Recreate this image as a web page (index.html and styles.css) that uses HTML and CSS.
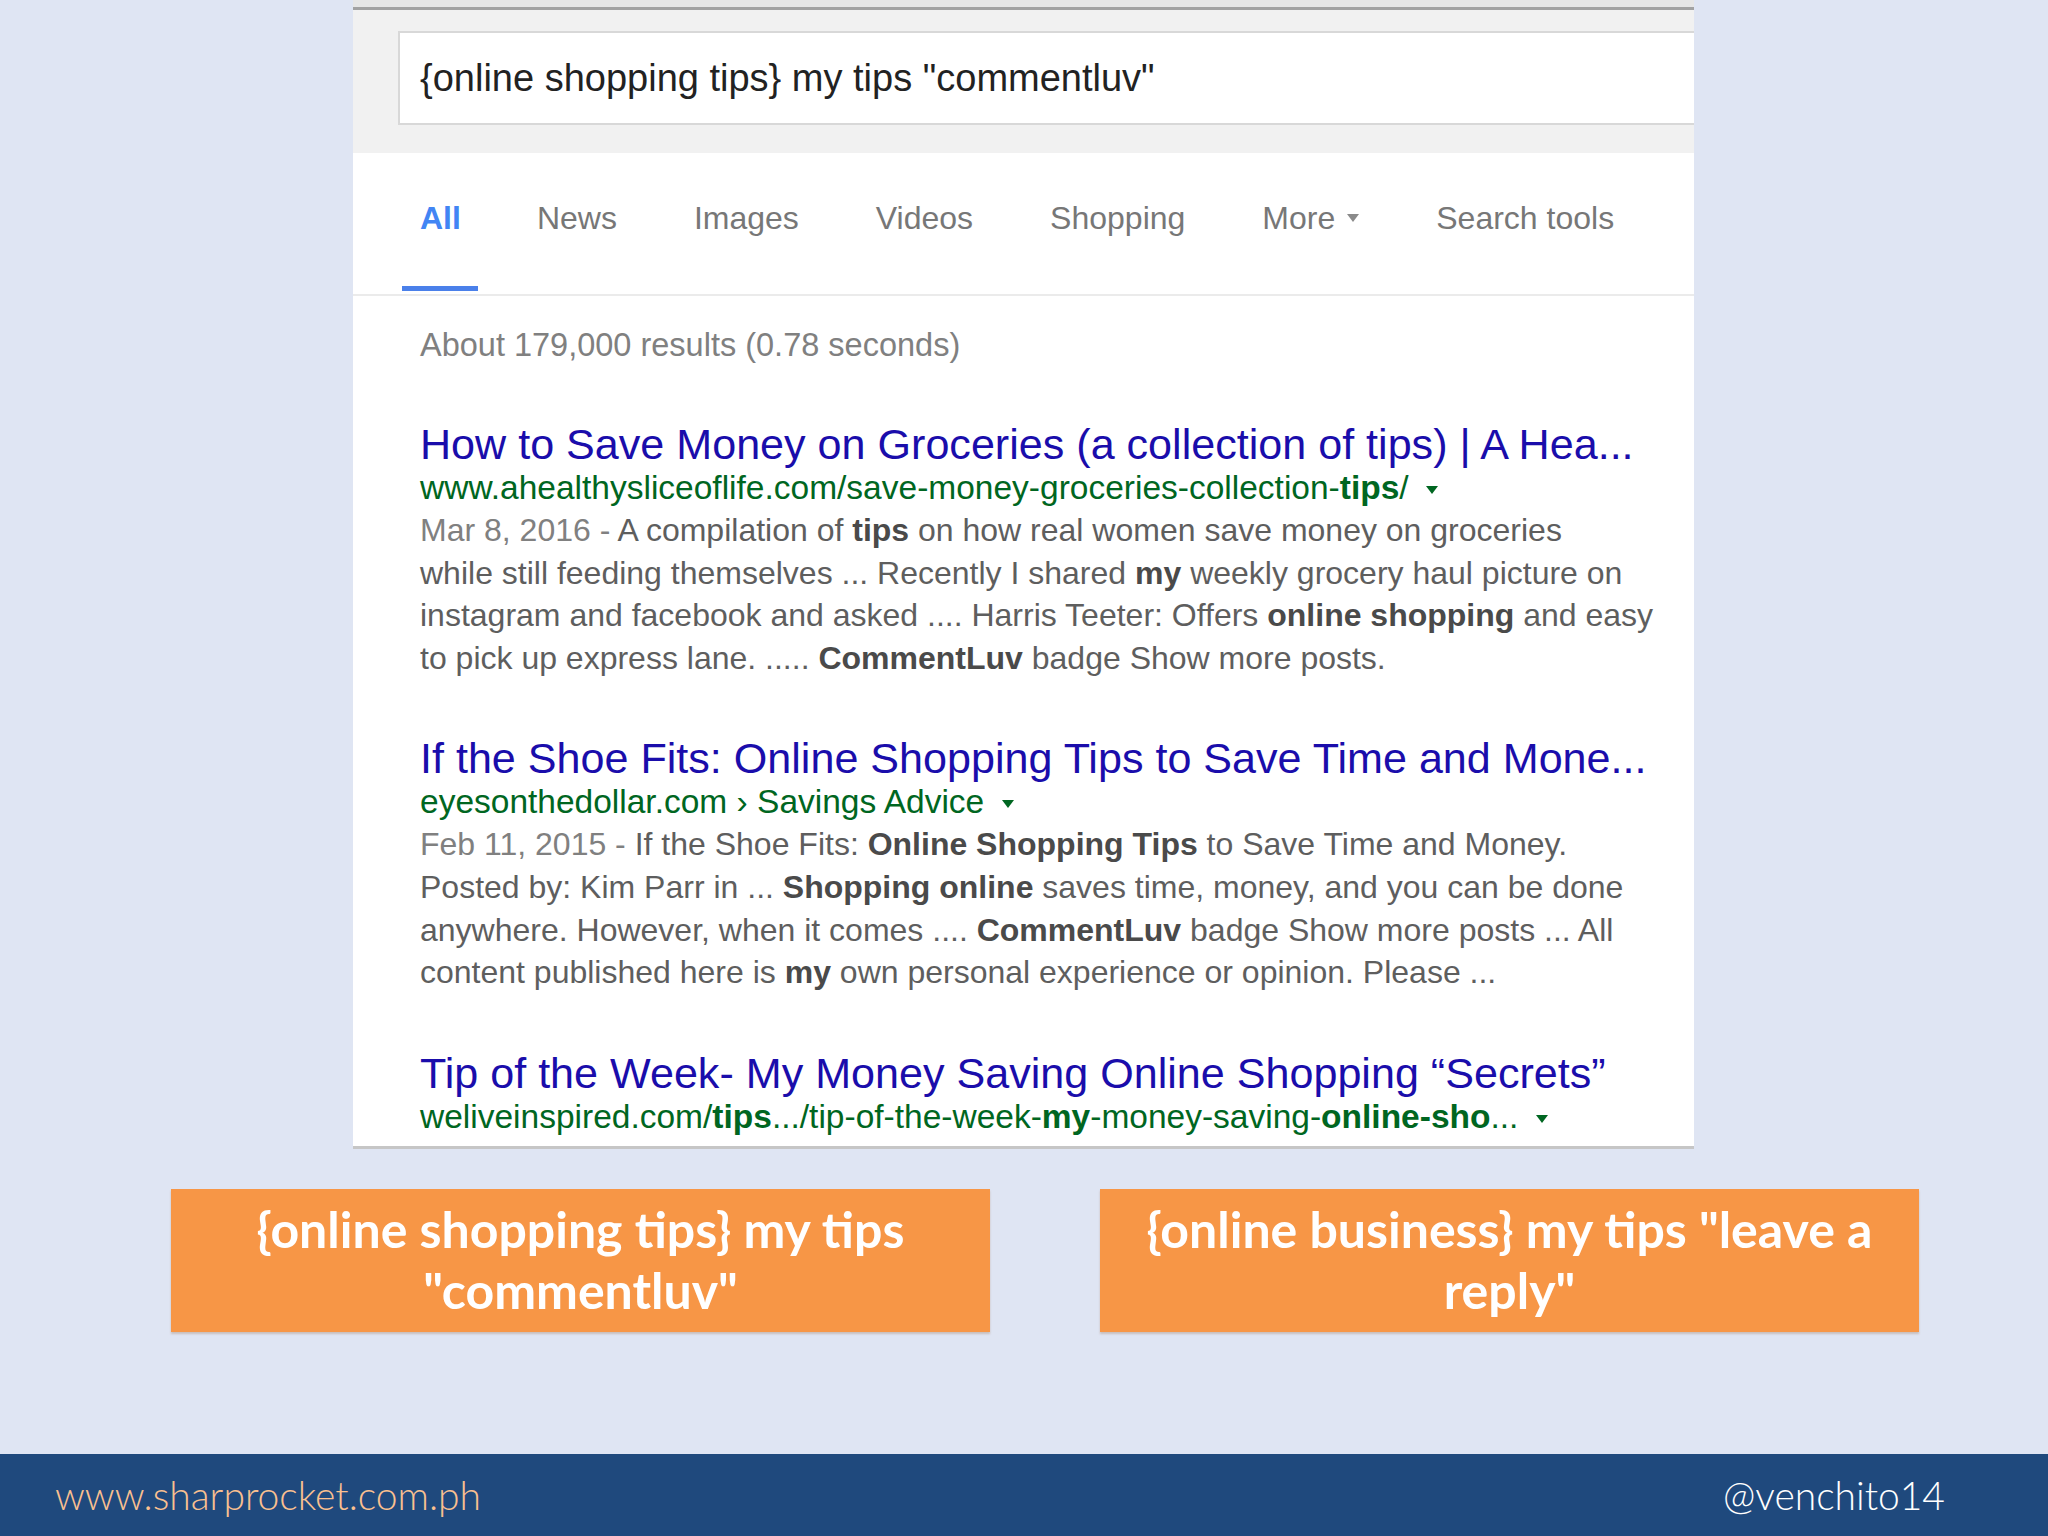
FILE: index.html
```html
<!DOCTYPE html>
<html>
<head>
<meta charset="utf-8">
<link rel="stylesheet" href="styles.css">
</head>
<body>
<div class="slide">
  <div class="panel">
    <div class="top-strip"></div>
    <div class="search-header">
      <div class="search-box">{online shopping tips} my tips "commentluv"</div>
    </div>
    <div class="tabs">
      <div class="tab active">All</div>
      <div class="tab">News</div>
      <div class="tab">Images</div>
      <div class="tab">Videos</div>
      <div class="tab">Shopping</div>
      <div class="tab">More <svg class="caret" viewBox="0 0 12 8" width="12" height="8"><path d="M0 0 L12 0 L6 8 Z" fill="#8a8a8a"/></svg></div>
      <div class="tab">Search tools</div>
    </div>
    <div class="results">
      <div class="count">About 179,000 results (0.78 seconds)</div>

      <div class="result">
        <div class="title">How to Save Money on Groceries (a collection of tips) | A Hea...</div>
        <div class="url">www.ahealthysliceoflife.com/save-money-groceries-collection-<b>tips</b>/ <svg class="drop" viewBox="0 0 12 8" width="12" height="8"><path d="M0 0 L12 0 L6 8 Z" fill="#006621"/></svg></div>
        <div class="snippet"><span class="date">Mar 8, 2016 - </span>A compilation of <b>tips</b> on how real women save money on groceries<br>while still feeding themselves ... Recently I shared <b>my</b> weekly grocery haul picture on<br>instagram and facebook and asked .... Harris Teeter: Offers <b>online shopping</b> and easy<br>to pick up express lane. ..... <b>CommentLuv</b> badge Show more posts.</div>
      </div>

      <div class="result">
        <div class="title">If the Shoe Fits: Online Shopping Tips to Save Time and Mone...</div>
        <div class="url">eyesonthedollar.com › Savings Advice <svg class="drop" viewBox="0 0 12 8" width="12" height="8"><path d="M0 0 L12 0 L6 8 Z" fill="#006621"/></svg></div>
        <div class="snippet"><span class="date">Feb 11, 2015 - </span>If the Shoe Fits: <b>Online Shopping Tips</b> to Save Time and Money.<br>Posted by: Kim Parr in ... <b>Shopping online</b> saves time, money, and you can be done<br>anywhere. However, when it comes .... <b>CommentLuv</b> badge Show more posts ... All<br>content published here is <b>my</b> own personal experience or opinion. Please ...</div>
      </div>

      <div class="result">
        <div class="title">Tip of the Week- My Money Saving Online Shopping “Secrets”</div>
        <div class="url">weliveinspired.com/<b>tips</b>.../tip-of-the-week-<b>my</b>-money-saving-<b>online-sho</b>... <svg class="drop" viewBox="0 0 12 8" width="12" height="8"><path d="M0 0 L12 0 L6 8 Z" fill="#006621"/></svg></div>
      </div>
    </div>
  </div>

  <div class="boxes">
    <div class="box">{online shopping tips} my tips<br>"commentluv"</div>
    <div class="box">{online business} my tips "leave a<br>reply"</div>
  </div>

  <div class="footer">
    <div class="site">www.sharprocket.com.ph</div>
    <div class="handle">@venchito14</div>
  </div>
</div>
</body>
</html>
```
FILE: styles.css
```css
html, body {
  margin: 0;
  padding: 0;
}
body {
  background: #dfe5f3;
  font-family: "Liberation Sans", Arial, sans-serif;
}
.slide {
  width: 2048px;
  height: 1536px;
  display: flex;
  flex-direction: column;
  overflow: hidden;
}
.panel {
  margin-left: 353px;
  width: 1341px;
  height: 1149px;
  background: #fff;
  border-bottom: 3px solid #c6c6c6;
  box-sizing: border-box;
  overflow: hidden;
  flex-shrink: 0;
}
.top-strip {
  height: 7px;
  background: #e6e6e6;
  border-bottom: 3px solid #a2a2a2;
}
.search-header {
  background: #f1f1f1;
  padding: 21px 0 28px 45px;
}
.search-box {
  height: 94px;
  box-sizing: border-box;
  background: #fff;
  border: 2px solid #d8d8d8;
  border-right: none;
  display: flex;
  align-items: center;
  padding-left: 20px;
  font-size: 38px;
  color: #222;
}
.tabs {
  height: 141px;
  border-bottom: 2px solid #ebebeb;
  display: flex;
  align-items: flex-start;
  padding-left: 49px;
  gap: 41px;
  box-sizing: content-box;
}
.tab {
  font-size: 32px;
  color: #777;
  line-height: 40px;
  padding: 45px 18px 0 18px;
  height: 88px;
  display: flex;
  align-items: flex-start;
}
.tab.active {
  color: #4285f4;
  font-weight: bold;
  border-bottom: 5px solid #4a80ea;
  height: 88px;
  padding-right: 17px;
}
.caret {
  margin-left: 12px;
  margin-top: 16px;
}
.results {
  padding: 28px 0 0 67px;
}
.count {
  font-size: 32.5px;
  line-height: 43px;
  color: #808080;
  margin-bottom: 56px;
}
.result {
  margin-bottom: 58px;
}
.title {
  font-size: 43.1px;
  line-height: 43px;
  color: #1a0dab;
  white-space: nowrap;
}
.url {
  font-size: 33.5px;
  line-height: 43px;
  color: #006621;
  white-space: nowrap;
}
.url b {
  font-weight: bold;
}
.drop {
  margin-left: 8px;
  vertical-align: 5px;
}
.snippet {
  font-size: 32px;
  line-height: 42.6px;
  color: #5e5e5e;
  white-space: nowrap;
}
.snippet b {
  color: #4a4a4a;
}
.date {
  color: #808080;
}
.boxes {
  display: flex;
  gap: 110px;
  padding-left: 171px;
  margin-top: 40px;
}
.box {
  width: 819px;
  height: 143px;
  box-sizing: border-box;
  background: #f79646;
  color: #fff;
  font-family: Lato, "Open Sans", sans-serif;
  font-weight: bold;
  font-size: 50px;
  line-height: 61px;
  text-align: center;
  padding: 10px 20px 0 20px;
  box-shadow: 0 2px 2px rgba(150, 100, 60, 0.3);
}
.footer {
  margin-top: auto;
  height: 82px;
  background: #1f497d;
  display: flex;
  align-items: center;
  justify-content: space-between;
  padding: 0 103px 0 55px;
  font-family: Lato, "Open Sans", sans-serif;
  font-weight: 300;
  font-size: 39px;
}
.site {
  color: #fac090;
}
.handle {
  color: #fff;
}
```
